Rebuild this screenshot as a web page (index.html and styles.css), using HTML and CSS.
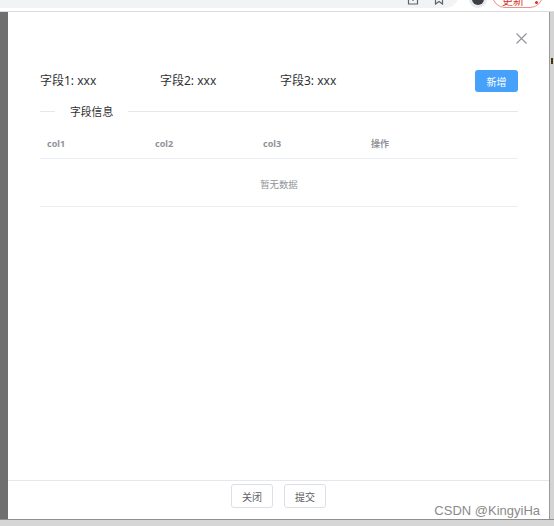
FILE: index.html
```html
<!DOCTYPE html>
<html lang="zh">
<head>
<meta charset="utf-8">
<title>Dialog</title>
<link rel="stylesheet" href="styles.css">
</head>
<body>
<div class="chrome">
  <div class="omnibox">
    <svg class="ico share" width="12" height="12" viewBox="0 0 12 12"><path d="M1.5 4v7h9V4" fill="none" stroke="#5f6368" stroke-width="1.2"/><path d="M6 1v7" stroke="#5f6368" stroke-width="1.2"/></svg>
    <svg class="ico star" width="12" height="12" viewBox="0 0 12 12"><path d="M2.5 1v10l3.5-2.5 3.5 2.5V1" fill="none" stroke="#5f6368" stroke-width="1.2"/></svg>
  </div>
  <div class="avatar"><span class="head"></span></div>
  <div class="update"><span class="update-text">更新</span><span class="dot"></span></div>
  <div class="chrome-end"></div>
</div>
<div class="stage">
  <div class="backdrop"></div>
  <div class="dialog">
    <div class="dlg-header">
      <svg class="close" width="11" height="11" viewBox="0 0 11 11"><path d="M0.5 0.5L10.5 10.5M10.5 0.5L0.5 10.5" stroke="#909399" stroke-width="1.1"/></svg>
    </div>
    <div class="dlg-body">
      <div class="fields">
        <span class="field">字段1: xxx</span>
        <span class="field">字段2: xxx</span>
        <span class="field">字段3: xxx</span>
        <button class="btn-primary">新增</button>
      </div>
      <div class="divider">
        <span class="line short"></span>
        <span class="divider-text">字段信息</span>
        <span class="line"></span>
      </div>
      <div class="table">
        <div class="thead">
          <span class="th">col1</span>
          <span class="th">col2</span>
          <span class="th">col3</span>
          <span class="th">操作</span>
        </div>
        <div class="empty">暂无数据</div>
      </div>
    </div>
    <div class="dlg-footer">
      <button class="btn">关闭</button>
      <button class="btn">提交</button>
    </div>
  </div>
  <div class="edge"><span class="mark"></span></div>
</div>
<div class="bottom-band"></div>
<div class="watermark">CSDN @KingyiHa</div>
</body>
</html>
```

FILE: styles.css
```css
* { box-sizing: border-box; }
html, body { margin: 0; padding: 0; }
body {
  width: 554px;
  height: 526px;
  overflow: hidden;
  position: relative;
  background: #d8d8d8;
  font-family: "Noto Sans", "Noto Sans CJK SC", sans-serif;
}

/* browser chrome strip */
.chrome {
  height: 12px;
  background: #ffffff;
  border-bottom: 1px solid #dadce0;
  display: flex;
  align-items: flex-end;
  overflow: hidden;
}
.omnibox {
  flex: 1;
  height: 28px;
  margin-bottom: 3px;
  background: #f1f3f4;
  border-radius: 0 0 14px 0;
  display: flex;
  align-items: flex-end;
  justify-content: flex-end;
  gap: 14px;
  padding: 0 14px 3px 0;
}
.ico { display: block; }
.avatar {
  width: 18px;
  height: 26px;
  margin: 0 5px 3px 10px;
  border-radius: 0 0 9px 9px;
  background: #e8eaed;
  display: flex;
  justify-content: center;
  align-items: flex-end;
  padding-bottom: 3px;
}
.head {
  width: 12px;
  height: 12px;
  border-radius: 0 0 6px 6px;
  background: #3c4043;
}
.update {
  width: 51px;
  height: 26px;
  margin-bottom: 3px;
  border: 1px solid #f28b82;
  border-radius: 13px;
  background: #fff;
  display: flex;
  align-items: flex-end;
  padding: 0 0 0 9px;
}
.update-text {
  font-size: 11px;
  line-height: 11px;
  color: #d93025;
  margin-bottom: 1px;
}
.dot {
  width: 3px;
  height: 3px;
  border-radius: 50%;
  background: #d93025;
  margin: 0 0 3px 11px;
}
.chrome-end { width: 11px; }

/* main area */
.stage {
  display: flex;
  height: 507px;
}
.backdrop {
  width: 8px;
  background: #6f6f6f;
}
.dialog {
  width: 541px;
  background: #ffffff;
  display: flex;
  flex-direction: column;
}
.edge {
  width: 5px;
  background: #d3d3d3;
  border-left: 1px solid #9a9a9a;
  padding-top: 46px;
  display: flex;
  flex-direction: column;
  align-items: center;
}
.mark {
  width: 2px;
  height: 6px;
  background: #4a3512;
}
.bottom-band {
  height: 7px;
  background: #d6d6d6;
  border-top: 1px solid #8f8f8f;
}

.dlg-header {
  height: 58px;
  display: flex;
  justify-content: flex-end;
  align-items: flex-start;
  padding: 21px 22px 0 0;
}
.close { display: block; }

.dlg-body {
  flex: 1;
  padding: 0 31px 0 32px;
}
.fields {
  display: flex;
  align-items: center;
  height: 22px;
}
.field {
  width: 120px;
  font-size: 12px;
  color: #303133;
  padding-bottom: 3px;
}
.field:nth-child(3) { width: 119px; }
.btn-primary {
  margin-left: auto;
  width: 43px;
  height: 22px;
  border: none;
  border-radius: 3px;
  background: #46a1fb;
  color: #ffffff;
  font-family: "Noto Sans CJK SC", sans-serif;
  font-size: 10px;
  padding: 0;
}

.divider {
  margin-top: 13px;
  height: 12px;
  display: flex;
  align-items: center;
}
.line {
  flex: 1;
  height: 1px;
  background: #e4e7ed;
}
.line.short { flex: 0 0 15px; }
.divider-text {
  padding: 0 15px 0 15px;
  font-size: 10.8px;
  color: #303133;
  font-family: "Noto Sans CJK SC", sans-serif;
}

.table { margin-top: 12px; }
.thead {
  display: grid;
  grid-template-columns: 108px 108px 108px 1fr;
  height: 30px;
  align-items: center;
  border-bottom: 1px solid #ebeef5;
}
.th {
  padding-left: 7px;
  font-size: 9px;
  font-weight: 700;
  color: #909399;
}
.empty {
  height: 48px;
  border-bottom: 1px solid #ebeef5;
  display: flex;
  justify-content: center;
  align-items: center;
  padding-top: 3px;
  font-size: 9.4px;
  color: #909399;
  font-family: "Noto Sans CJK SC", sans-serif;
}

.dlg-footer {
  height: 39px;
  border-top: 1px solid #e4e7ed;
  display: flex;
  justify-content: center;
  align-items: flex-start;
  gap: 11px;
  padding-top: 3px;
}
.btn {
  width: 42px;
  height: 24px;
  border: 1px solid #dcdfe6;
  border-radius: 3px;
  background: #ffffff;
  color: #606266;
  font-family: "Noto Sans CJK SC", sans-serif;
  font-size: 10px;
  padding: 0;
}

.watermark {
  position: absolute;
  right: 14px;
  top: 503px;
  font-family: "Liberation Sans", Arial, sans-serif;
  font-size: 13px;
  color: #8a8a8a;
}
```
